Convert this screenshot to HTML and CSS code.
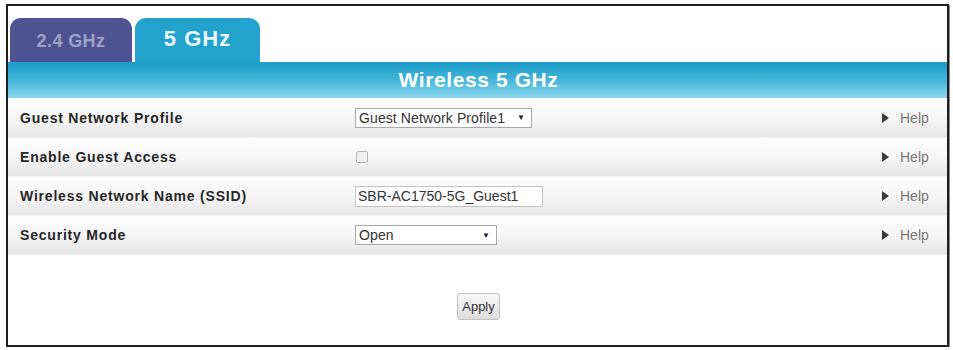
FILE: index.html
```html
<!DOCTYPE html>
<html>
<head>
<meta charset="utf-8">
<link rel="stylesheet" href="styles.css">
</head>
<body>
<div class="frame">
  <div class="tabs">
    <div class="tab tab-off">2.4 GHz</div>
    <div class="tab tab-on">5 GHz</div>
  </div>
  <div class="banner">Wireless 5 GHz</div>
  <div class="rows">
    <div class="row">
      <div class="label">Guest Network Profile</div>
      <div class="ctrl"><div class="select sel1"><span>Guest Network Profile1</span><span class="caret">▼</span></div></div>
      <div class="help"><span class="tri"></span>Help</div>
    </div>
    <div class="row">
      <div class="label">Enable Guest Access</div>
      <div class="ctrl"><div class="check"></div></div>
      <div class="help"><span class="tri"></span>Help</div>
    </div>
    <div class="row">
      <div class="label">Wireless Network Name (SSID)</div>
      <div class="ctrl"><div class="input">SBR-AC1750-5G_Guest1</div></div>
      <div class="help"><span class="tri"></span>Help</div>
    </div>
    <div class="row">
      <div class="label">Security Mode</div>
      <div class="ctrl"><div class="select sel2"><span>Open</span><span class="caret">▼</span></div></div>
      <div class="help"><span class="tri"></span>Help</div>
    </div>
  </div>
  <div class="footer">
    <div class="apply">Apply</div>
  </div>
</div>
</body>
</html>
```

FILE: styles.css
```css
html, body {
  margin: 0;
  padding: 0;
  background: #fff;
}
body {
  font-family: "Liberation Sans", Arial, sans-serif;
}
.frame {
  margin: 4px 0 0 6px;
  width: 939px;
  height: 339px;
  border: 2px solid #1e1e1e;
  box-shadow: 1px 1px 0 #888;
  display: flex;
  flex-direction: column;
  background: #fff;
}
.tabs {
  display: flex;
  gap: 3px;
  padding: 12px 0 0 2px;
  height: 44px;
  align-items: flex-end;
}
.tab {
  height: 44px;
  border-radius: 11px 11px 0 0;
  display: flex;
  align-items: center;
  justify-content: center;
  font-weight: bold;
  box-sizing: border-box;
}
.tab-off {
  width: 122px;
  background: #4e5290;
  color: #9ea3c8;
  font-size: 18px;
  letter-spacing: 0.4px;
  padding-top: 2px;
}
.tab-on {
  width: 125px;
  background: #22a2cc;
  color: #e8f8fc;
  font-size: 22px;
  letter-spacing: 1px;
  padding-bottom: 2px;
}
.banner {
  height: 36px;
  background: linear-gradient(#1b9cc8 0%, #3fb3d9 45%, #8ad6ec 100%);
  color: #fff;
  font-weight: bold;
  font-size: 21px;
  letter-spacing: 0.6px;
  display: flex;
  align-items: center;
  justify-content: center;
  padding-left: 2px;
}
.rows {
  display: flex;
  flex-direction: column;
}
.row {
  height: 39px;
  display: flex;
  align-items: center;
  background: linear-gradient(#fdfdfd 0%, #f6f6f6 50%, #e6e6e6 100%);
  border-bottom: 1px solid #f2f2f2;
  box-sizing: border-box;
}
.row:first-child {
  height: 40px;
}
.label {
  width: 335px;
  padding-left: 12px;
  font-weight: bold;
  font-size: 14px;
  color: #262626;
  letter-spacing: 0.8px;
}
.ctrl {
  flex: 1;
  display: flex;
  align-items: center;
}
.select {
  height: 20px;
  box-sizing: border-box;
  border: 1px solid #a9a9a9;
  background: #fff;
  display: flex;
  align-items: center;
  justify-content: space-between;
  padding: 0 6px 0 3px;
  font-size: 14px;
  letter-spacing: 0.1px;
  color: #333;
}
.sel1 { width: 177px; }
.sel2 { width: 142px; }
.caret {
  font-size: 8px;
  color: #222;
}
.check {
  width: 10px;
  height: 10px;
  border: 1px solid #b5b5b5;
  background: #f0f0f0;
  border-radius: 2px;
  margin-left: 1px;
}
.input {
  width: 188px;
  height: 21px;
  box-sizing: border-box;
  border: 1px solid #c4c4c4;
  background: #fff;
  font-size: 14px;
  color: #333;
  padding-left: 2px;
  display: flex;
  align-items: center;
}
.help {
  width: 65px;
  display: flex;
  align-items: center;
  font-size: 14px;
  color: #777;
}
.tri {
  width: 0;
  height: 0;
  border-top: 5px solid transparent;
  border-bottom: 5px solid transparent;
  border-left: 7px solid #3a3a3a;
  margin-right: 11px;
}
.footer {
  flex: 1;
  display: flex;
  justify-content: center;
  align-items: flex-start;
  padding-top: 38px;
  padding-left: 2px;
}
.apply {
  width: 43px;
  height: 27px;
  box-sizing: border-box;
  border: 1px solid #c2c2c2;
  border-radius: 3px;
  background: linear-gradient(#f8f8f8, #dedede);
  font-size: 13px;
  color: #333;
  display: flex;
  align-items: center;
  justify-content: center;
}
```
